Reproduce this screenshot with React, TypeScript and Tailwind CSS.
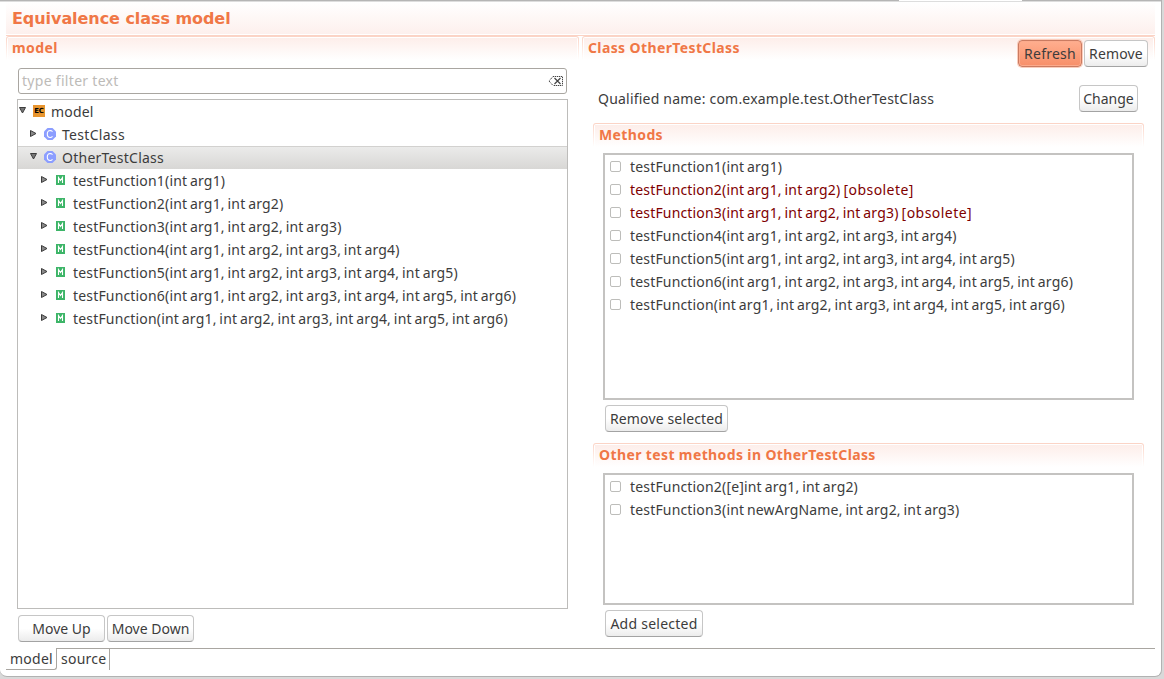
import type { ReactNode } from "react";

const args = (n: number) => Array.from({ length: n }, (_, i) => `int arg${i + 1}`).join(", ");

const methods = [
  { name: `testFunction1(${args(1)})` },
  { name: `testFunction2(${args(2)})`, obsolete: true },
  { name: `testFunction3(${args(3)})`, obsolete: true },
  { name: `testFunction4(${args(4)})` },
  { name: `testFunction5(${args(5)})` },
  { name: `testFunction6(${args(6)})` },
  { name: `testFunction(${args(6)})` },
];

const otherMethods = [
  { name: "testFunction2([e]int arg1, int arg2)" },
  { name: "testFunction3(int newArgName, int arg2, int arg3)" },
];

function Arrow({ open = false }: { open?: boolean }) {
  return (
    <svg width="9" height="9" viewBox="0 0 9 9" className="mb-[2px] shrink-0">
      {open ? (
        <path d="M1.5 1.5H7.5L4.5 7Z" fill="#777" stroke="#3c3c3c" />
      ) : (
        <path d="M1.5 1.5V7.5L7 4.5Z" fill="#8a8a8a" stroke="#3c3c3c" />
      )}
    </svg>
  );
}

function ModelIcon() {
  return (
    <span className="mb-px flex h-3 w-3 shrink-0 items-center justify-center bg-[#e8952e] font-['DejaVu_Sans'] text-[7px] leading-none font-bold tracking-[-0.2px] text-black">
      EC
    </span>
  );
}

function ClassIcon() {
  return (
    <svg width="12" height="12" viewBox="0 0 12 12" className="mb-px shrink-0">
      <path d="M3.5 0h5L12 3.5v5L8.5 12h-5L0 8.5v-5Z" fill="#8c9eff" />
      <path d="M8.5 3.6Q7.5 2.5 6.2 2.5Q3.3 2.7 3.3 6Q3.3 9.3 6.2 9.5Q7.5 9.5 8.5 8.4" fill="none" stroke="#fff" strokeWidth="1.1" />
    </svg>
  );
}

function MethodIcon() {
  return (
    <svg width="9" height="10" viewBox="0 0 9 10" className="mb-[2px] shrink-0">
      <path d="M0 0h9v10H0Z" fill="#3db568" />
      <path d="M2.5 8V2.5L4.5 5.5L6.5 2.5V8" fill="none" stroke="#fff" strokeWidth="1.1" />
    </svg>
  );
}

function Button({ children, className = "" }: { children: ReactNode; className?: string }) {
  return (
    <button
      className={`flex h-[27px] shrink-0 items-center justify-center rounded-[4px] border border-[#c6c6c6] border-b-[#a3a3a3] bg-linear-to-b from-white from-50% to-[#ececec] whitespace-nowrap ${className}`}
    >
      {children}
    </button>
  );
}

function SectionHead({ children, className = "" }: { children: ReactNode; className?: string }) {
  return (
    <div className={`flex h-6 shrink-0 rounded-t-[3px] bg-linear-to-b from-[#fbd3c5] to-white px-px pt-px ${className}`}>
      <div className="flex flex-1 rounded-t-[2px] bg-white px-px pt-px">
        <h2 className="flex-1 bg-linear-to-b from-[#fdeeea] to-white pl-1 text-[14px] leading-[19px] font-bold tracking-[0.38px] whitespace-nowrap text-[#f07746]">
          {children}
        </h2>
      </div>
    </div>
  );
}

function CheckList({ items, className = "" }: { items: { name: string; obsolete?: boolean }[]; className?: string }) {
  return (
    <ul className={`shrink-0 border-2 border-[#c4c3c1] bg-white ${className}`}>
      {items.map((m) => (
        <li key={m.name} className="flex h-[23px] items-center pl-[5px]">
          <span className="mr-[9px] h-[11px] w-[11px] rounded-[2px] border border-[#bdbdba] bg-white" />
          <span className={m.obsolete ? "tracking-[0.17px] text-[#800000] [word-spacing:-1px]" : "tracking-[0.17px] [word-spacing:-1px]"}>
            {m.name}
            {m.obsolete && <span className="tracking-[0.45px]"> [obsolete]</span>}
          </span>
        </li>
      ))}
    </ul>
  );
}

export default function App() {
  return (
    <div className="h-[679px] w-[1164px] overflow-hidden bg-[#d9d9d9] font-['Noto_Sans','Open_Sans',sans-serif] text-[14px] leading-[23px] whitespace-nowrap text-[#3c3c3c]">
      <div className="flex h-[677px] w-[1162px] flex-col rounded-b-[7px] border-r border-b border-[#b2b2b2] bg-white">
        <div className="flex h-px shrink-0">
          <i className="w-[899px] bg-[#b5b5b5]" />
          <i className="w-[123px] bg-white" />
          <i className="flex-1 bg-[#b5b5b5]" />
        </div>
        <div className="h-px shrink-0 bg-[#dddddd]" />
        <h1 className="mr-[6px] ml-[6px] h-8 shrink-0 bg-linear-to-b from-white to-[#fdf0ed] pl-[6px] font-['DejaVu_Sans'] text-[16px] leading-[33px] font-bold tracking-[-0.06px] text-[#f07746]">
          Equivalence class model
        </h1>
        <div className="mx-[6px] mt-px h-px shrink-0 bg-[#fbd3c5]" />
        <main className="mx-[6px] flex h-[612px] shrink-0 gap-[3px]">
          <section className="flex w-[573px] flex-col">
            <SectionHead>model</SectionHead>
            <div className="mt-2 ml-3 flex h-[26px] w-[549px] shrink-0 items-center justify-between rounded-[3px] border border-[#a9a6a1] pr-[3px] pl-[3px] tracking-[0.3px] text-[#bdbbb8]">
              <span className="pb-[2px]">type filter text</span>
              <svg width="15" height="12" viewBox="0 0 15 12" fill="none" stroke="#444">
                <path d="M5 1.5H14.5V10.5H5" strokeDasharray="1.3 .7" />
                <path d="M5 1.5L1 6L5 10.5" strokeDasharray="1.3 .7" />
                <path d="M6.5 3L12.5 9M12.5 3L6.5 9" strokeWidth="1.2" />
              </svg>
            </div>
            <div className="mt-[5px] ml-[11px] h-[510px] w-[551px] shrink-0 border border-[#bdbcba]">
              <div className="flex h-[23px] items-center">
                <Arrow open />
                <span className="ml-[6px] flex"><ModelIcon /></span>
                <span className="ml-[6px] tracking-[0.2px]">model</span>
              </div>
              <div className="flex h-[23px] items-center pl-[11px]">
                <Arrow />
                <span className="ml-[6px] flex"><ClassIcon /></span>
                <span className="ml-[6px] tracking-[0.3px]">TestClass</span>
              </div>
              <div className="flex h-[23px] items-center border-t border-[#d2d1cf] bg-linear-to-b from-[#ebebea] to-[#d8d7d5] pb-px pl-[11px]">
                <Arrow open />
                <span className="ml-[6px] flex"><ClassIcon /></span>
                <span className="ml-[6px] tracking-[0.25px]">OtherTestClass</span>
              </div>
              {methods.map((m) => (
                <div key={m.name} className="flex h-[23px] items-center pl-[22px]">
                  <Arrow />
                  <span className="ml-[7px] flex"><MethodIcon /></span>
                  <span className="ml-[8px] tracking-[0.17px] [word-spacing:-1px]">{m.name}</span>
                </div>
              ))}
            </div>
            <div className="mt-[6px] ml-3 flex gap-[2px]">
              <Button className="w-[87px]">Move Up</Button>
              <Button className="w-[87px]">Move Down</Button>
            </div>
          </section>
          <section className="flex w-[573px] flex-col">
            <div className="flex h-[49px] shrink-0">
              <SectionHead className="flex-1">Class OtherTestClass</SectionHead>
              <div className="-ml-[137px] flex gap-[2px] pt-1 pr-[7px]">
                <button className="flex h-[27px] w-[64px] items-center justify-center rounded-[4px] border border-[#cb7b61] bg-linear-to-b from-[#ffae8f] to-[#f78f69] tracking-[0.25px] shadow-[0_0_0_1px_#fbcdbc,inset_0_0_0_1px_#fbab8d]">
                  Refresh
                </button>
                <Button className="w-[64px] tracking-[0.15px]">Remove</Button>
              </div>
            </div>
            <div className="flex h-[27px] shrink-0 items-center justify-between pr-[17px] pl-4">
              <span className="tracking-[0.21px]">Qualified name: com.example.test.OtherTestClass</span>
              <Button className="w-[59px]">Change</Button>
            </div>
            <div className="mt-[11px] flex flex-col pr-[11px] pl-[11px]">
              <SectionHead>Methods</SectionHead>
              <CheckList items={methods} className="mt-[6px] ml-[10px] h-[247px] w-[531px]" />
              <Button className="mt-[5px] ml-3 w-[123px] tracking-[0.15px]">Remove selected</Button>
              <SectionHead className="mt-[11px]">Other test methods in OtherTestClass</SectionHead>
              <CheckList items={otherMethods} className="mt-[6px] ml-[10px] h-[132px] w-[531px]" />
              <Button className="mt-[5px] ml-3 w-[98px] tracking-[0.25px]">Add selected</Button>
            </div>
          </section>
        </main>
        <nav className="mx-[6px] flex h-[22px] shrink-0 tracking-[0.25px]">
          <span className="w-[51px] rounded-br-[3px] border-r border-b border-[#a9a6a1] pl-1 leading-[21px]">model</span>
          <span className="w-[53px] border-t border-r border-[#a9a6a1] pl-1 leading-[19px]">source</span>
          <span className="flex-1 border-t border-[#a9a6a1]" />
        </nav>
      </div>
    </div>
  );
}
